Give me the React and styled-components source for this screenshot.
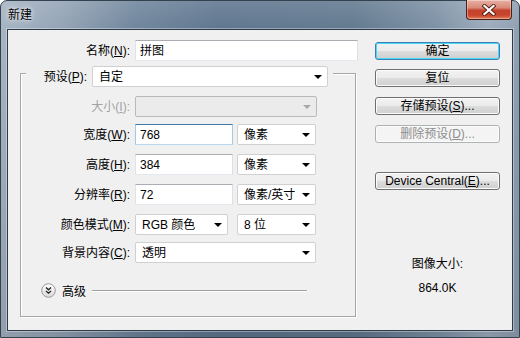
import React from "react";
import styled, { createGlobalStyle, css } from "styled-components";

const GlobalStyle = createGlobalStyle`
  html, body { margin: 0; padding: 0; background: #fff; }
  body {
    font-family: "Liberation Sans", "Noto Sans CJK SC", sans-serif;
    font-size: 12px;
    color: #000;
  }
  * { box-sizing: border-box; }
`;

const Window = styled.div`
  width: 520px;
  height: 338px;
  display: flex;
  flex-direction: column;
  border: 1px solid #34414f;
  border-radius: 7px 7px 0 0;
  background:
    linear-gradient(180deg, rgba(255,255,255,0.12), rgba(255,255,255,0) 30px, rgba(0,0,0,0.12)),
    linear-gradient(90deg, #a6b4c3 0%, #93a3b5 12%, #6f859c 26%, #5f768f 42%, #62798f 68%, #7d91a5 84%, #9dacbc 94%, #8fa0b2 100%);
`;

const TitleBar = styled.div`
  height: 28px;
  display: flex;
  justify-content: space-between;
  align-items: flex-start;
`;

const Title = styled.div`
  padding: 7px 0 0 7px;
  font-size: 12px;
  line-height: 14px;
  text-shadow: 0 0 6px rgba(255,255,255,0.9), 0 0 3px rgba(255,255,255,0.7);
`;

const CloseButton = styled.div`
  width: 46px;
  height: 20px;
  margin: -1px 7px 0 0;
  border: 1px solid #4a2019;
  border-top: none;
  border-radius: 0 0 4px 4px;
  display: flex;
  align-items: center;
  justify-content: center;
  background: linear-gradient(180deg, #e7b1a5 0%, #d98a78 40%, #c4422b 55%, #c9462e 80%, #e07a55 100%);
  box-shadow: inset 0 0 0 1px rgba(255,255,255,0.35);
`;

const Client = styled.div`
  flex: 1;
  margin: 0 6px 6px 6px;
  border: 1px solid #2e3a47;
  box-shadow: 0 0 0 1px rgba(255,255,255,0.35);
  background: #f0f0f0;
  display: flex;
`;

const LeftCol = styled.div`
  width: 348px;
  padding-left: 12px;
  display: flex;
  flex-direction: column;
`;

const NameRow = styled.div`
  margin-top: 10px;
  display: grid;
  grid-template-columns: 110px 223px;
  column-gap: 5px;
  align-items: center;
  height: 21px;
`;

const Label = styled.div`
  text-align: right;
  white-space: nowrap;
  line-height: 14px;
  color: ${(p) => (p.$disabled ? "#a3a3a3" : "#000")};
  ${(p) => p.$width && css`width: ${p.$width}px;`}
`;

const TextInput = styled.div`
  height: 21px;
  width: ${(p) => (p.$width ? `${p.$width}px` : "100%")};
  display: flex;
  align-items: center;
  padding-left: 4px;
  background: #fff;
  border: 1px solid;
  border-color: ${(p) =>
    p.$focused ? "#3d7bad #a4c9e3 #b7d9ed #a4c9e3" : "#abadb3 #dbdfe6 #e3e9ef #e2e3ea"};
  line-height: 14px;
  white-space: nowrap;
`;

const SelectBox = styled.div`
  height: 21px;
  width: ${(p) => p.$width}px;
  display: flex;
  align-items: center;
  justify-content: space-between;
  padding: 0 5px 0 6px;
  border: 1px solid ${(p) => (p.$disabled ? "#b9b9b9" : "#d0d0d0")};
  border-radius: 2px;
  background: ${(p) => (p.$disabled ? "#ebebeb" : "#fff")};
  line-height: 14px;
  white-space: nowrap;
`;

const Arrow = styled.span`
  width: 0;
  height: 0;
  border-left: 4px solid transparent;
  border-right: 4px solid transparent;
  border-top: 4px solid ${(p) => (p.$disabled ? "#a8a8a8" : "#000")};
`;

const GroupBox = styled.div`
  margin-top: 12px;
  width: 336px;
  border: 1px solid #a6a6a6;
  box-shadow: inset 1px 1px 0 #fff, 1px 1px 0 #fff;
  display: flex;
  flex-direction: column;
  padding-bottom: 18px;
`;

const PresetHeader = styled.div`
  align-self: flex-start;
  margin: -8px 0 0 5px;
  padding: 0 5px 0 17px;
  background: #f0f0f0;
  display: flex;
  align-items: center;
  gap: 5px;
`;

const FieldRow = styled.div`
  margin-top: ${(p) => p.$mt}px;
  display: grid;
  grid-template-columns: 109px 1fr;
  column-gap: 5px;
  align-items: center;
  height: 21px;
`;

const Controls = styled.div`
  display: flex;
  gap: ${(p) => p.$gap || 4}px;
`;

const AdvancedRow = styled.div`
  margin-top: 20px;
  padding-left: 20px;
  height: 15px;
  display: flex;
  align-items: center;
  gap: 6px;
`;

const Rule = styled.div`
  width: 215px;
  height: 2px;
  border-top: 1px solid #a0a0a0;
  border-bottom: 1px solid #fff;
`;

const RightCol = styled.div`
  margin-left: 19px;
  width: 125px;
  padding-top: 12px;
  display: flex;
  flex-direction: column;
`;

const Button = styled.div`
  height: 18px;
  margin-top: ${(p) => p.$mt || 0}px;
  display: flex;
  align-items: center;
  justify-content: center;
  line-height: 14px;
  white-space: nowrap;
  border-radius: 3px;
  border: 1px solid ${(p) => (p.$primary ? "#3c7fb1" : p.$disabled ? "#adb2b5" : "#707070")};
  color: ${(p) => (p.$disabled ? "#8d8d8d" : "#000")};
  background: ${(p) =>
    p.$disabled
      ? "#f4f4f4"
      : "linear-gradient(180deg, #f2f2f2 0%, #ebebeb 50%, #dddddd 51%, #cfcfcf 100%)"};
  box-shadow: inset 0 0 0 1px ${(p) => (p.$primary ? "#48d8fb" : "#fcfcfc")};
`;

const InfoBlock = styled.div`
  margin-top: 67px;
  display: flex;
  flex-direction: column;
  align-items: center;
  gap: 10px;
  line-height: 14px;
`;

const ExpandIcon = () => (
  <svg width="15" height="15" viewBox="0 0 15 15">
    <defs>
      <linearGradient id="adv" x1="0" y1="0" x2="0" y2="1">
        <stop offset="0" stopColor="#ffffff" />
        <stop offset="1" stopColor="#d9d9d9" />
      </linearGradient>
    </defs>
    <circle cx="7.5" cy="7.5" r="6.8" fill="url(#adv)" stroke="#9a9a9a" />
    <path d="M5 4.6 L7.5 6.8 L10 4.6 M5 8 L7.5 10.2 L10 8" fill="none" stroke="#222" strokeWidth="1.3" />
  </svg>
);

const CloseGlyph = () => (
  <svg width="16" height="12" viewBox="0 0 16 12">
    <path d="M3.5 2 L12.5 10 M12.5 2 L3.5 10" stroke="#5a1f14" strokeWidth="4" strokeLinecap="square" />
    <path d="M3.5 2 L12.5 10 M12.5 2 L3.5 10" stroke="#fff" strokeWidth="2.2" strokeLinecap="square" />
  </svg>
);

export default function App() {
  return (
    <>
      <GlobalStyle />
      <Window>
        <TitleBar>
          <Title>新建</Title>
          <CloseButton>
            <CloseGlyph />
          </CloseButton>
        </TitleBar>
        <Client>
          <LeftCol>
            <NameRow>
              <Label>名称(<u>N</u>):</Label>
              <TextInput>拼图</TextInput>
            </NameRow>
            <GroupBox>
              <PresetHeader>
                <Label $width={44}>预设(<u>P</u>):</Label>
                <SelectBox $width={236}>
                  自定
                  <Arrow />
                </SelectBox>
              </PresetHeader>
              <FieldRow $mt={9}>
                <Label $disabled>大小(<u>I</u>):</Label>
                <Controls>
                  <SelectBox $width={182} $disabled>
                    <span />
                    <Arrow $disabled />
                  </SelectBox>
                </Controls>
              </FieldRow>
              <FieldRow $mt={7}>
                <Label>宽度(<u>W</u>):</Label>
                <Controls>
                  <TextInput $width={98} $focused>768</TextInput>
                  <SelectBox $width={79}>
                    像素
                    <Arrow />
                  </SelectBox>
                </Controls>
              </FieldRow>
              <FieldRow $mt={9}>
                <Label>高度(<u>H</u>):</Label>
                <Controls>
                  <TextInput $width={98}>384</TextInput>
                  <SelectBox $width={79}>
                    像素
                    <Arrow />
                  </SelectBox>
                </Controls>
              </FieldRow>
              <FieldRow $mt={9}>
                <Label>分辨率(<u>R</u>):</Label>
                <Controls>
                  <TextInput $width={98}>72</TextInput>
                  <SelectBox $width={79}>
                    像素/英寸
                    <Arrow />
                  </SelectBox>
                </Controls>
              </FieldRow>
              <FieldRow $mt={9}>
                <Label>颜色模式(<u>M</u>):</Label>
                <Controls $gap={9}>
                  <SelectBox $width={93}>
                    RGB 颜色
                    <Arrow />
                  </SelectBox>
                  <SelectBox $width={79}>
                    8 位
                    <Arrow />
                  </SelectBox>
                </Controls>
              </FieldRow>
              <FieldRow $mt={7}>
                <Label>背景内容(<u>C</u>):</Label>
                <Controls>
                  <SelectBox $width={181}>
                    透明
                    <Arrow />
                  </SelectBox>
                </Controls>
              </FieldRow>
              <AdvancedRow>
                <ExpandIcon />
                <span>高级</span>
                <Rule />
              </AdvancedRow>
            </GroupBox>
          </LeftCol>
          <RightCol>
            <Button $primary>确定</Button>
            <Button $mt={9}>复位</Button>
            <Button $mt={10}>存储预设(<u>S</u>)...</Button>
            <Button $mt={10} $disabled>删除预设(<u>D</u>)...</Button>
            <Button $mt={29}>Device Central(<u>E</u>)...</Button>
            <InfoBlock>
              <span>图像大小:</span>
              <span>864.0K</span>
            </InfoBlock>
          </RightCol>
        </Client>
      </Window>
    </>
  );
}
